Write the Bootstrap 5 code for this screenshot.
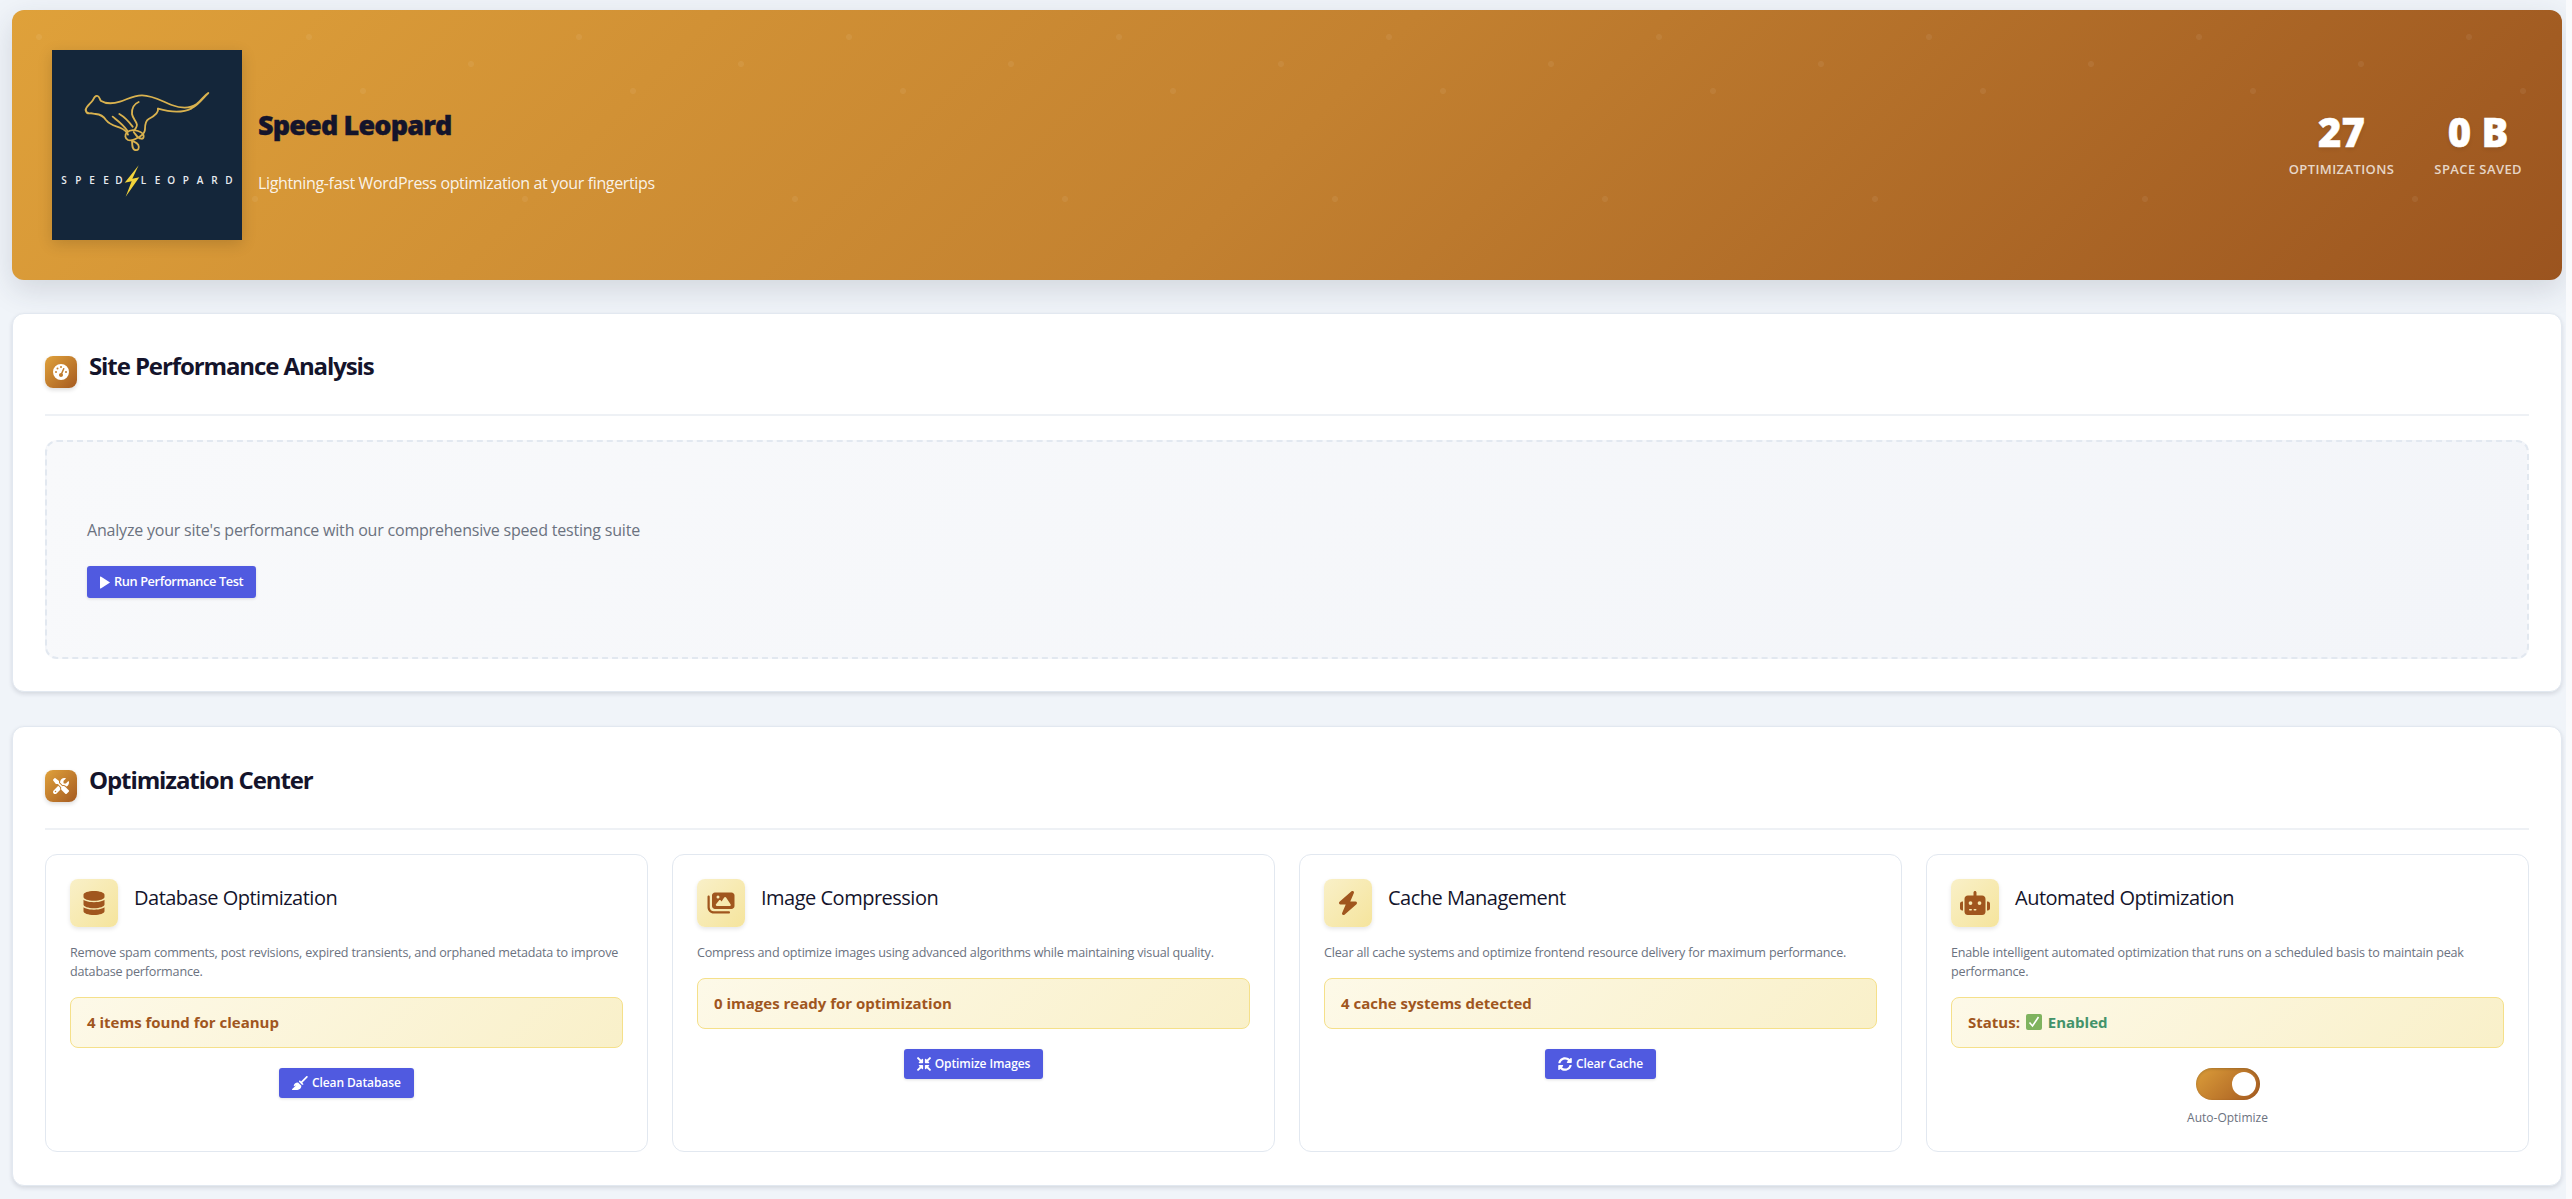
<!DOCTYPE html>
<html lang="en">
<head>
    <meta charset="UTF-8">
    <meta name="viewport" content="width=device-width, initial-scale=1.0">
    <title>Speed Leopard</title>
    <link href="https://cdn.jsdelivr.net/npm/bootstrap@5.3.0/dist/css/bootstrap.min.css" rel="stylesheet">
    <style>
        html, body { height: 100%; }
        body {
            background: #f9fafc;
            font-family: "Open Sans", "Noto Sans", sans-serif;
            color: #14142b;
        }
        .sl-wrap {
            width: 2566px;
            min-height: 100%;
            overflow: hidden;
            background: #f0f4f9;
            padding: 10px 4px 12px 12px;
        }

        /* header banner */
        .sl-hero {
            height: 270px;
            padding: 0 40px;
            border-radius: 12px;
            margin-bottom: 33px;
            box-shadow: 0 10px 30px rgba(40, 50, 70, .15);
            background-color: #c5832f;
            background-image:
                radial-gradient(circle at 27px 27px, rgba(255,255,255,.06) 2.6px, transparent 3.4px),
                radial-gradient(circle at 189px 54px, rgba(255,255,255,.06) 2.6px, transparent 3.4px),
                radial-gradient(circle at 81px 81px, rgba(255,255,255,.06) 2.6px, transparent 3.4px),
                radial-gradient(circle at 243px 189px, rgba(255,255,255,.06) 2.6px, transparent 3.4px),
                linear-gradient(135deg, #dfa13a 0%, #c38130 50%, #9b541f 100%);
            background-size: 270px 270px, 270px 270px, 270px 270px, 270px 270px, 100% 100%;
        }
        .sl-logo {
            width: 190px;
            height: 190px;
            flex: none;
            background: #14263a;
            box-shadow: 0 4px 14px rgba(0, 0, 0, .15);
        }
        .sl-logo svg { display: block; width: 190px; height: 190px; }
        .sl-logo text {
            font-family: "Open Sans", sans-serif;
            font-size: 30px;
            font-weight: 600;
            fill: #e8ecf0;
        }
        .sl-brand { margin-left: 16px; }
        .sl-brand h1 {
            font-size: 27px;
            font-weight: 800;
            line-height: 60px;
            margin: 0 0 16px;
            color: #14142b;
            letter-spacing: -.85px;
            -webkit-text-stroke: .4px #14142b;
        }
        .sl-brand p {
            font-size: 16px;
            line-height: 24px;
            margin: 0;
            color: rgba(255, 255, 255, .9);
            letter-spacing: -.35px;
        }
        .sl-stats { gap: 40px; }
        .sl-stat { text-align: center; }
        .sl-num {
            font-size: 40px;
            font-weight: 800;
            line-height: 40px;
            margin-bottom: 8px;
            color: #fff;
            text-shadow: 0 2px 4px rgba(0, 0, 0, .1);
            -webkit-text-stroke: .5px #fff;
        }
        .sl-lbl {
            font-size: 13px;
            font-weight: 600;
            line-height: 18px;
            letter-spacing: .4px;
            text-transform: uppercase;
            color: rgba(255, 255, 255, .75);
        }

        /* white panels */
        .sl-panel {
            background: #fff;
            border: 1px solid #e2e8f0;
            border-radius: 12px;
            padding: 32px;
            margin-bottom: 34px;
            box-shadow: 0 2px 4px rgba(40, 50, 70, .14);
        }
        .sl-panel:last-child { margin-bottom: 0; padding-bottom: 33px; }
        .sl-head {
            padding: 10px 0 26px;
            border-bottom: 2px solid #eef1f5;
            margin-bottom: 24px;
        }
        .sl-panel + .sl-panel .sl-head { padding-top: 11px; }
        .sl-head h2 {
            font-size: 24px;
            font-weight: 700;
            line-height: 20px;
            margin: 0 0 0 12px;
            color: #14142b;
            letter-spacing: -1.1px;
        }
        .sl-badge {
            width: 32px;
            height: 32px;
            flex: none;
            border-radius: 8px;
            background: linear-gradient(135deg, #e0a23c, #a55a20);
            box-shadow: 0 2px 4px rgba(0, 0, 0, .14);
        }
        .sl-badge svg { fill: #fff; width: 16px; height: 16px; }

        /* speed test box */
        .sl-test {
            padding: 77px 40px 59px;
            border: 2px dashed #e2e8f0;
            border-radius: 12px;
            background: linear-gradient(135deg, #f8f9fb, #f3f5f9);
        }
        .sl-test p {
            font-size: 16px;
            font-weight: 500;
            line-height: 23px;
            margin: 0 0 24px;
            color: #6b7280;
            letter-spacing: -.2px;
        }

        .sl-btn {
            display: inline-flex;
            align-items: center;
            gap: 4px;
            padding: 0 13px;
            height: 30px;
            border: 0;
            border-radius: 3px;
            background: #505ae0;
            color: #fff;
            font-size: 12px;
            font-weight: 600;
            box-shadow: 0 1px 3px rgba(0, 0, 0, .12);
            letter-spacing: -.1px;
        }
        .sl-btn svg { fill: #fff; width: auto; height: 14px; flex: none; }
        .sl-btn-lg { height: 32px; font-size: 12.8px; letter-spacing: -.4px; }
        .sl-btn-lg svg { width: 10px; height: 13px; }

        /* tool cards */
        .sl-tools {
            display: grid;
            grid-template-columns: repeat(4, minmax(0, 1fr));
            gap: 24px;
        }
        .sl-tool {
            border: 1px solid #e2e8f0;
            border-radius: 12px;
            padding: 24px;
        }
        .sl-tool-icon {
            width: 48px;
            height: 48px;
            flex: none;
            border-radius: 8px;
            background: linear-gradient(135deg, #f9f0c8, #f5e49c);
            box-shadow: 0 2px 4px rgba(0, 0, 0, .1);
        }
        .sl-tool-icon svg { fill: #a0561e; height: 24px; width: 30px; }
        .sl-tool h3 {
            font-size: 20px;
            font-weight: 500;
            line-height: 38px;
            margin: 0 0 0 16px;
            color: #14142b;
            letter-spacing: -.5px;
        }
        .sl-desc {
            font-size: 12.6px;
            line-height: 19.2px;
            margin: 16px 0;
            color: #6b7280;
            letter-spacing: -.2px;
        }
        .sl-status {
            padding: 14px 16px;
            border: 1px solid #f5e08a;
            border-radius: 8px;
            background: linear-gradient(135deg, #fdf9e8, #f9f0c9);
            font-size: 15px;
            font-weight: 700;
            line-height: 21px;
            color: #a0561e;
            margin-bottom: 20px;
        }
        .sl-on { color: #43936a; }
        .sl-check { width: 16px; height: 16px; vertical-align: -2px; margin: 0 2px; }
        .sl-toggle {
            width: 64px;
            height: 32px;
            padding: 4px;
            margin: 0 auto;
            border-radius: 16px;
            background: linear-gradient(135deg, #dc9e3a, #a55a20);
            box-shadow: inset 0 1px 3px rgba(0, 0, 0, .2);
        }
        .sl-knob {
            width: 24px;
            height: 24px;
            margin-left: auto;
            border-radius: 50%;
            background: #fff;
        }
        .sl-tog-lbl {
            font-size: 12px;
            line-height: 19px;
            margin-top: 8px;
            color: #6b7280;
            text-align: center;
        }
    </style>
</head>
<body>
    <div class="sl-wrap">
        <div class="sl-hero d-flex align-items-center justify-content-between">
            <div class="d-flex align-items-center">
                <div class="sl-logo">
                    <svg viewBox="36 30 570 570">
                        <!-- leopard outline -->
                        <g fill="none" stroke="#d9b24f" stroke-width="5.5" stroke-linecap="round" stroke-linejoin="round">
                            <path d="M137 210C139 198 151 192 159 180C162 172 167 166 173 168C178 170 179 176 182 182C196 191 220 191 240 185C262 178 280 166 306 166C340 166 370 186 395 195C425 206 450 206 470 192C485 180 492 166 505 159C490 172 480 190 455 205C430 218 395 218 354 206"/>
                            <path d="M137 210C138 217 142 221 151 220C156 219 161 222 167 222C180 223 190 228 198 240C210 256 228 258 242 264C255 270 261 276 264 284"/>
                            <path d="M354 206C357 220 342 229 326 237C316 243 315 255 315 267C315 277 310 283 301 289C290 296 275 305 264 300C255 295 253 285 261 277C268 270 282 269 294 273C303 276 312 282 311 290C310 299 300 297 293 291C288 286 286 282 281 276"/>
                            <path d="M276 302C283 306 291 307 295 315C299 325 295 332 285 330C276 328 277 316 276 302Z"/>
                            <path d="M296 186C282 192 275 206 276 222C278 234 286 241 290 251C293 258 288 264 284 269"/>
                            <path d="M238 222C252 230 266 244 278 260M218 230C230 240 248 252 262 272"/>
                        </g>
                        <polygon points="296,376 254,428 275,424 257,470 298,412 277,416" fill="#f2d33b"/>
                        <text x="64" y="432">S</text><text x="106" y="432">P</text><text x="148" y="432">E</text><text x="190" y="432">E</text><text x="226" y="432">D</text>
                        <text x="302" y="432">L</text><text x="344" y="432">E</text><text x="382" y="432">O</text><text x="428" y="432">P</text><text x="470" y="432">A</text><text x="514" y="432">R</text><text x="556" y="432">D</text>
                    </svg>
                </div>
                <div class="sl-brand">
                    <h1>Speed Leopard</h1>
                    <p>Lightning-fast WordPress optimization at your fingertips</p>
                </div>
            </div>
            <div class="sl-stats d-flex">
                <div class="sl-stat">
                    <div class="sl-num">27</div>
                    <div class="sl-lbl">Optimizations</div>
                </div>
                <div class="sl-stat">
                    <div class="sl-num">0 B</div>
                    <div class="sl-lbl">Space Saved</div>
                </div>
            </div>
        </div>

        <div class="sl-panel">
            <div class="sl-head d-flex align-items-start">
                <span class="sl-badge d-flex align-items-center justify-content-center">
                    <svg viewBox="0 0 512 512"><path d="M0 256a256 256 0 1 1 512 0A256 256 0 1 1 0 256zM288 96a32 32 0 1 0 -64 0 32 32 0 1 0 64 0zM256 416c35.3 0 64-28.7 64-64c0-17.4-6.9-33.1-18.1-44.6L366 161.7c5.3-12.1-.2-26.3-12.3-31.6s-26.3 .2-31.6 12.3L257.9 288c-.6 0-1.3 0-1.9 0c-35.3 0-64 28.7-64 64s28.7 64 64 64zM176 144a32 32 0 1 0 -64 0 32 32 0 1 0 64 0zM96 288a32 32 0 1 0 0-64 32 32 0 1 0 0 64zm352-32a32 32 0 1 0 -64 0 32 32 0 1 0 64 0z"/></svg>
                </span>
                <h2>Site Performance Analysis</h2>
            </div>
            <div class="sl-test">
                <p>Analyze your site's performance with our comprehensive speed testing suite</p>
                <button class="sl-btn sl-btn-lg">
                    <svg viewBox="0 0 384 512" preserveAspectRatio="none"><path d="M30 20C18 12 0 20 0 40V472C0 492 18 500 30 492L372 270C386 262 386 250 372 242Z"/></svg>
                    Run Performance Test
                </button>
            </div>
        </div>

        <div class="sl-panel">
            <div class="sl-head d-flex align-items-start">
                <span class="sl-badge d-flex align-items-center justify-content-center">
                    <svg viewBox="0 0 512 512"><path d="M78.600 5C69.100-2.400 55.600-1.500 47 7L7 47c-8.500 8.500-9.400 22-2.100 31.600l80 104c4.500 5.900 11.600 9.400 19 9.400h54.100l109 109c-14.700 29-10 65.400 14.300 89.600l112 112c12.500 12.500 32.800 12.500 45.300 0l64-64c12.500-12.500 12.500-32.800 0-45.300l-112-112c-24.200-24.200-60.600-29-89.600-14.300l-109-109V104c0-7.500-3.500-14.500-9.400-19L78.600 5zM19.900 396.100C7.200 408.800 0 426.100 0 444.100C0 481.600 30.400 512 67.900 512c18 0 35.300-7.200 48-19.900L233.700 374.300c-7.800-20.900-9-43.600-3.600-65.100l-61.700-61.700L19.900 396.100zM512 144c0-10.500-1.100-20.700-3.200-30.500c-2.400-11.200-16.100-14.100-24.200-6l-63.900 63.900c-3 3-7.100 4.700-11.300 4.700H352c-8.800 0-16-7.200-16-16V102.600c0-4.200 1.700-8.300 4.700-11.300l63.900-63.900c8.100-8.100 5.200-21.800-6-24.200C388.700 1.100 378.500 0 368 0C288.500 0 224 64.500 224 144l0 .8 85.300 85.300c36-9.100 75.800 .5 104 28.700L429 274.500c49-23 83-72.800 83-130.500zM56 432a24 24 0 1 1 48 0 24 24 0 1 1 -48 0z"/></svg>
                </span>
                <h2>Optimization Center</h2>
            </div>
            <div class="sl-tools">
                <div class="sl-tool">
                    <div class="d-flex align-items-start">
                        <span class="sl-tool-icon d-flex align-items-center justify-content-center">
                            <svg viewBox="0 0 448 512"><path d="M448 80v48c0 44.200-100.300 80-224 80S0 172.200 0 128V80C0 35.800 100.300 0 224 0S448 35.800 448 80zM393.200 214.700c20.800-7.400 39.900-16.900 54.800-28.600V288c0 44.200-100.300 80-224 80S0 332.200 0 288V186.100c14.900 11.800 34 21.200 54.800 28.600C99.700 230.700 159.500 240 224 240s124.300-9.300 169.200-25.300zM0 346.100c14.900 11.800 34 21.200 54.800 28.600C99.700 390.700 159.500 400 224 400s124.300-9.300 169.200-25.300c20.800-7.400 39.900-16.900 54.800-28.600V432c0 44.200-100.300 80-224 80S0 476.200 0 432V346.100z"/></svg>
                        </span>
                        <h3>Database Optimization</h3>
                    </div>
                    <p class="sl-desc">Remove spam comments, post revisions, expired transients, and orphaned metadata to improve database performance.</p>
                    <div class="sl-status">4 items found for cleanup</div>
                    <div class="text-center">
                        <button class="sl-btn">
                            <svg viewBox="0 0 576 512"><path d="M566.600 54.600c12.500-12.500 12.500-32.800 0-45.300s-32.800-12.500-45.300 0l-192 192-34.700-34.700c-4.200-4.200-10-6.600-16-6.600c-12.500 0-22.600 10.100-22.600 22.600v29.100L364.300 320h29.100c12.500 0 22.600-10.100 22.600-22.600c0-6-2.400-11.800-6.600-16l-34.700-34.700 192-192zM341.100 353.400L222.600 234.900c-42.700-3.700-85.200 11.700-115.800 42.300l-8 8C76.500 307.500 64 337.700 64 369.200c0 6.800 7.100 11.200 13.200 8.200l51.100-25.500c5-2.500 9.500 4.100 5.400 7.900L7.300 473.400C2.700 477.600 0 483.600 0 489.900C0 502.100 9.900 512 22.100 512l173.300 0c38.800 0 75.900-15.400 103.400-42.800c30.600-30.600 45.900-73.100 42.300-115.800z"/></svg>
                            Clean Database
                        </button>
                    </div>
                </div>
                <div class="sl-tool">
                    <div class="d-flex align-items-start">
                        <span class="sl-tool-icon d-flex align-items-center justify-content-center">
                            <svg viewBox="0 0 576 512"><path d="M160 32c-35.300 0-64 28.700-64 64V320c0 35.300 28.700 64 64 64H512c35.300 0 64-28.700 64-64V96c0-35.300-28.700-64-64-64H160zM396 138.700l96 144c4.900 7.400 5.400 16.800 1.200 24.600S480.900 320 472 320H328 280 200c-9.200 0-17.600-5.300-21.600-13.600s-2.900-18.200 2.900-25.400l64-80c4.600-5.700 11.400-9 18.700-9s14.200 3.300 18.700 9l17.300 21.600 56-84C360.500 132 368 128 376 128s15.500 4 20 10.700zM192 128a32 32 0 1 1 64 0 32 32 0 1 1 -64 0zM48 120c0-13.300-10.700-24-24-24S0 106.700 0 120V344c0 75.100 60.900 136 136 136H456c13.300 0 24-10.700 24-24s-10.700-24-24-24H136c-48.600 0-88-39.400-88-88V120z"/></svg>
                        </span>
                        <h3>Image Compression</h3>
                    </div>
                    <p class="sl-desc">Compress and optimize images using advanced algorithms while maintaining visual quality.</p>
                    <div class="sl-status">0 images ready for optimization</div>
                    <div class="text-center">
                        <button class="sl-btn">
                            <svg viewBox="0 0 512 512"><path d="M200 288H88c-21.400 0-32.100 25.800-17 41l32.900 31-99.200 99.300c-6.200 6.200-6.200 16.400 0 22.600l25.400 25.400c6.200 6.200 16.400 6.200 22.600 0L152 408l31.100 33c15.100 15.100 40.900 4.400 40.900-17V312c0-13.300-10.700-24-24-24zm112-64h112c21.400 0 32.100-25.900 17-41l-33-31 99.300-99.300c6.200-6.200 6.200-16.400 0-22.600L481.900 4.700c-6.200-6.200-16.400-6.200-22.600 0L360 104l-31.100-33C313.800 55.900 288 66.600 288 88v112c0 13.300 10.700 24 24 24zm96 136l33-31.100c15.100-15.100 4.400-40.900-17-40.900H312c-13.300 0-24 10.700-24 24v112c0 21.400 25.900 32.100 41 17l31-32.900 99.300 99.300c6.200 6.200 16.400 6.200 22.600 0l25.400-25.400c6.200-6.200 6.200-16.400 0-22.600L408 360zM183 71.100L152 104 52.700 4.700c-6.200-6.200-16.400-6.200-22.600 0L4.700 30.100c-6.200 6.200-6.200 16.400 0 22.600L104 152l-33 31.100C55.900 198.200 66.600 224 88 224h112c13.300 0 24-10.700 24-24V88c0-21.300-25.900-32-41-16.900z"/></svg>
                            Optimize Images
                        </button>
                    </div>
                </div>
                <div class="sl-tool">
                    <div class="d-flex align-items-start">
                        <span class="sl-tool-icon d-flex align-items-center justify-content-center">
                            <svg viewBox="0 0 448 512"><path d="M349.400 44.600c5.900-13.700 1.500-29.700-10.600-38.500s-28.600-8-39.900 1.800l-256 224c-10 8.800-13.600 22.900-8.900 35.300S50.700 288 64 288H175.500L98.600 467.400c-5.900 13.700-1.500 29.700 10.600 38.500s28.600 8 39.900-1.800l256-224c10-8.800 13.600-22.900 8.900-35.300s-16.600-20.700-30-20.700H272.500L349.400 44.600z"/></svg>
                        </span>
                        <h3>Cache Management</h3>
                    </div>
                    <p class="sl-desc">Clear all cache systems and optimize frontend resource delivery for maximum performance.</p>
                    <div class="sl-status">4 cache systems detected</div>
                    <div class="text-center">
                        <button class="sl-btn">
                            <svg viewBox="0 0 512 512"><path d="M370.720 133.280C339.458 104.008 298.888 87.962 255.848 88c-77.458.068-144.328 53.178-162.791 126.850-1.344 5.363-6.122 9.150-11.651 9.150H24.103c-7.498 0-13.194-6.807-11.807-14.176C33.933 94.924 134.813 8 256 8c66.448 0 126.791 26.136 171.315 68.685L463.030 40.970C478.149 25.851 504 36.559 504 57.941V192c0 13.255-10.745 24-24 24H345.941c-21.382 0-32.090-25.851-16.971-40.971l41.750-41.749zM32 296h134.059c21.382 0 32.090 25.851 16.971 40.971l-41.750 41.750c31.262 29.273 71.835 45.319 114.876 45.280 77.418-.070 144.315-53.144 162.787-126.849 1.344-5.363 6.122-9.150 11.651-9.150h57.304c7.498 0 13.194 6.807 11.807 14.176C478.067 417.076 377.187 504 256 504c-66.448 0-126.791-26.136-171.315-68.685L48.970 471.030C33.851 486.149 8 475.441 8 454.059V320c0-13.255 10.745-24 24-24z"/></svg>
                            Clear Cache
                        </button>
                    </div>
                </div>
                <div class="sl-tool">
                    <div class="d-flex align-items-start">
                        <span class="sl-tool-icon d-flex align-items-center justify-content-center">
                            <svg viewBox="0 0 640 512"><path d="M320 0c17.700 0 32 14.300 32 32V96H472c39.800 0 72 32.200 72 72V440c0 39.800-32.200 72-72 72H168c-39.800 0-72-32.200-72-72V168c0-39.800 32.200-72 72-72H288V32c0-17.700 14.300-32 32-32zM208 384c-8.800 0-16 7.200-16 16s7.200 16 16 16h32c8.800 0 16-7.200 16-16s-7.200-16-16-16H208zm96 0c-8.800 0-16 7.200-16 16s7.200 16 16 16h32c8.800 0 16-7.200 16-16s-7.200-16-16-16H400zM264 256a40 40 0 1 0 -80 0 40 40 0 1 0 80 0zm152 40a40 40 0 1 0 0-80 40 40 0 1 0 0 80zM48 224H64V416H48c-26.500 0-48-21.500-48-48V272c0-26.500 21.500-48 48-48zm544 0c26.500 0 48 21.500 48 48v96c0 26.500-21.500 48-48 48H576V224h16z"/></svg>
                        </span>
                        <h3>Automated Optimization</h3>
                    </div>
                    <p class="sl-desc">Enable intelligent automated optimization that runs on a scheduled basis to maintain peak performance.</p>
                    <div class="sl-status">Status:
                        <svg class="sl-check" viewBox="0 0 16 16"><rect width="16" height="16" rx="2" fill="#7fb35f"/><path d="M3.500 8.500l3 3.500 6-9" fill="none" stroke="#fff" stroke-width="1.600"/></svg>
                        <span class="sl-on">Enabled</span>
                    </div>
                    <div class="sl-toggle"><div class="sl-knob"></div></div>
                    <div class="sl-tog-lbl">Auto-Optimize</div>
                </div>
            </div>
        </div>
    </div>
    <script src="https://cdn.jsdelivr.net/npm/bootstrap@5.3.0/dist/js/bootstrap.bundle.min.js"></script>
</body>
</html>
